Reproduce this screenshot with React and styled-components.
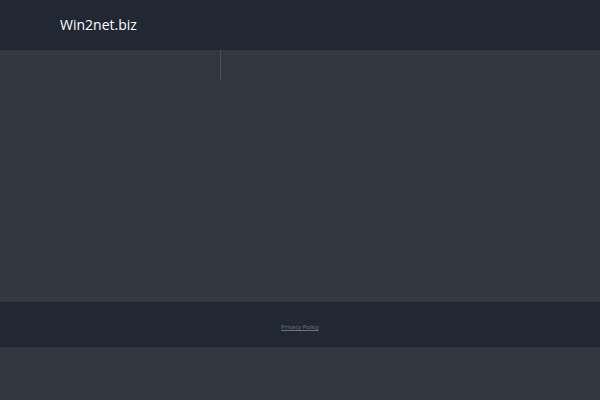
import React from "react";
import styled, { createGlobalStyle } from "styled-components";

const Global = createGlobalStyle`
  body {
    margin: 0;
    background: #33373f;
    font-family: "Open Sans", "Noto Sans", sans-serif;
  }
`;

const Header = styled.header`
  display: flex;
  align-items: center;
  height: 50px;
  padding: 0 10%;
  background: #212733;
`;

const Title = styled.h1`
  margin: 0;
  color: #ffffff;
  font-size: 14px;
  font-weight: 500;
  line-height: 20px;
`;

const Main = styled.main`
  display: flex;
  justify-content: center;
  height: 252px;
`;

const Columns = styled.div`
  width: 160px;
  height: 30px;
  border-left: 1px solid #4a4e55;
`;

const Footer = styled.footer`
  display: flex;
  align-items: center;
  justify-content: center;
  height: 45px;
  padding-top: 5px;
  box-sizing: border-box;
  background: #212733;
`;

const PolicyLink = styled.a`
  color: #70747b;
  font-family: "Noto Sans", "Open Sans", sans-serif;
  font-size: 6px;
  line-height: 10px;
  text-decoration: underline;
`;

export default function App() {
  return (
    <>
      <Global />
      <Header>
        <Title>Win2net.biz</Title>
      </Header>
      <Main>
        <Columns />
      </Main>
      <Footer>
        <PolicyLink href="#privacy">Privacy Policy</PolicyLink>
      </Footer>
    </>
  );
}
